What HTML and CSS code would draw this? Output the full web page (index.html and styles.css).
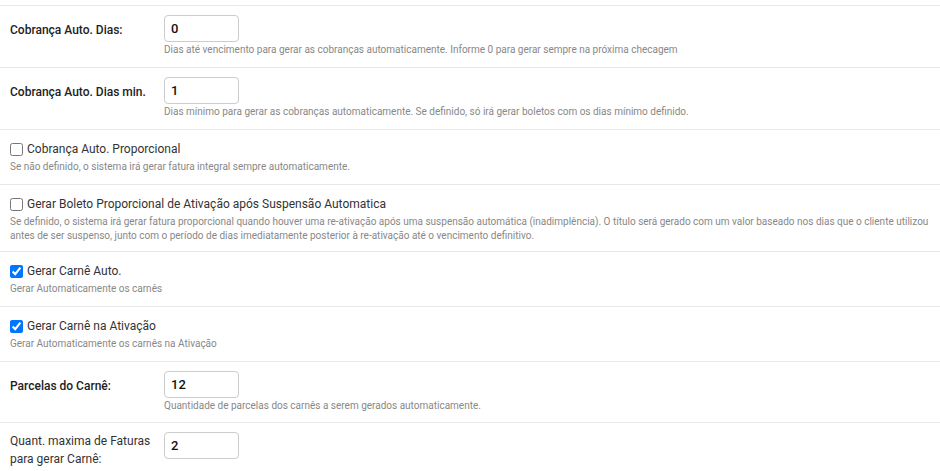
FILE: index.html
```html
<!DOCTYPE html>
<html lang="pt-BR">
<head>
<meta charset="utf-8">
<title>Configurações</title>
<link rel="stylesheet" href="styles.css">
</head>
<body>
<div class="form">
  <div class="row field">
    <label class="lbl">Cobrança Auto. Dias:</label>
    <div class="ctl">
      <input class="inp" type="text" value="0">
      <div class="help">Dias até vencimento para gerar as cobranças automaticamente. Informe 0 para gerar sempre na próxima checagem</div>
    </div>
  </div>
  <div class="row field">
    <label class="lbl">Cobrança Auto. Dias min.</label>
    <div class="ctl">
      <input class="inp" type="text" value="1">
      <div class="help">Dias mínimo para gerar as cobranças automaticamente. Se definido, só irá gerar boletos com os dias mínimo definido.</div>
    </div>
  </div>
  <div class="row check">
    <label class="chk"><input type="checkbox"> Cobrança Auto. Proporcional</label>
    <div class="help">Se não definido, o sistema irá gerar fatura integral sempre automaticamente.</div>
  </div>
  <div class="row check multi">
    <label class="chk"><input type="checkbox"> Gerar Boleto Proporcional de Ativação após Suspensão Automatica</label>
    <div class="help">Se definido, o sistema irá gerar fatura proporcional quando houver uma re-ativação após uma suspensão automática (inadimplência). O título será gerado com um valor baseado nos dias que o cliente utilizou antes de ser suspenso, junto com o período de dias imediatamente posterior à re-ativação até o vencimento definitivo.</div>
  </div>
  <div class="row check">
    <label class="chk"><input type="checkbox" checked> Gerar Carnê Auto.</label>
    <div class="help">Gerar Automaticamente os carnês</div>
  </div>
  <div class="row check">
    <label class="chk"><input type="checkbox" checked> Gerar Carnê na Ativação</label>
    <div class="help">Gerar Automaticamente os carnês na Ativação</div>
  </div>
  <div class="row field short">
    <label class="lbl">Parcelas do Carnê:</label>
    <div class="ctl">
      <input class="inp" type="text" value="12">
      <div class="help">Quantidade de parcelas dos carnês a serem gerados automaticamente.</div>
    </div>
  </div>
  <div class="row field top">
    <label class="lbl plain">Quant. maxima de Faturas para gerar Carnê:</label>
    <div class="ctl">
      <input class="inp" type="text" value="2">
    </div>
  </div>
</div>
</body>
</html>
```
FILE: styles.css
```css
html, body {
  margin: 0;
  padding: 0;
  background: #fff;
}
body {
  font-family: Roboto, "Liberation Sans", Arial, sans-serif;
  color: #333;
  padding-top: 5px;
}
.form {
  display: flex;
  flex-direction: column;
}
.row {
  border-top: 1px solid #e8e8e8;
  padding: 9px 10px 10px 10px;
}
.field {
  display: grid;
  grid-template-columns: 154px 1fr;
  align-items: start;
}
.field.short {
  padding-bottom: 9px;
}
.field .lbl {
  font-size: 12px;
  font-weight: 500;
  line-height: 18px;
  margin-top: 6px;
  color: #222;
}
.field.top .lbl {
  margin-top: 0;
}
.lbl.plain {
  font-weight: 400;
  font-size: 12px;
  color: #333;
}
.ctl {
  display: flex;
  flex-direction: column;
}
.inp {
  width: 75px;
  height: 27px;
  box-sizing: border-box;
  border: 1px solid #ccc;
  border-radius: 4px;
  padding: 0 6px;
  font-family: Roboto, "Liberation Sans", Arial, sans-serif;
  font-size: 13px;
  font-weight: 500;
  color: #111;
  margin: 0;
}
.help {
  font-size: 10px;
  line-height: 14px;
  color: #888;
  margin-top: 1px;
}
.check {
  padding-top: 10px;
}
.check .help {
  margin-top: 2px;
}
.check.multi {
  padding-bottom: 8px;
}
.chk {
  display: flex;
  align-items: center;
  font-size: 12px;
  line-height: 18px;
  color: #333;
}
.chk input {
  margin: 0 4px 0 0;
  width: 13px;
  height: 13px;
}
```
